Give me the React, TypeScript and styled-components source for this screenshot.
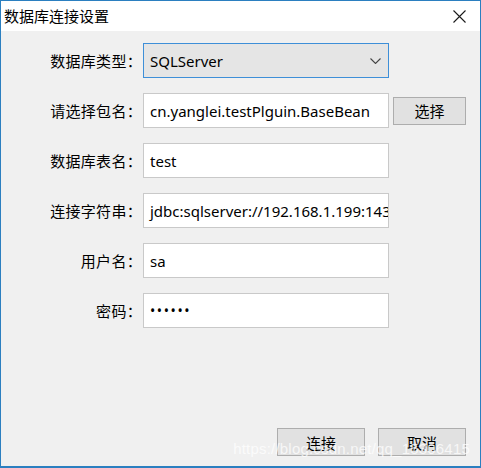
import React from 'react';
import styled, { createGlobalStyle } from 'styled-components';

const GlobalStyle = createGlobalStyle`
  html, body {
    margin: 0;
    padding: 0;
    background: #ffffff;
  }
  * {
    box-sizing: border-box;
  }
`;

const FONT = `"Noto Sans", "Noto Sans CJK SC", sans-serif`;

type Field = {
  label: string;
  value: string;
  kind?: 'select' | 'input' | 'password';
  action?: string;
};

const fields: Field[] = [
  { label: '数据库类型：', value: 'SQLServer', kind: 'select' },
  { label: '请选择包名：', value: 'cn.yanglei.testPlguin.BaseBean', action: '选择' },
  { label: '数据库表名：', value: 'test' },
  { label: '连接字符串：', value: 'jdbc:sqlserver://192.168.1.199:1433;DatabaseName=test' },
  { label: '用户名：', value: 'sa' },
  { label: '密码：', value: '••••••', kind: 'password' },
];

const App = () => {
  return (
    <Window>
      <GlobalStyle />
      <TitleBar>
        <Title>数据库连接设置</Title>
        <CloseButton>
          <svg width="13" height="13" viewBox="0 0 13 13">
            <path d="M0.5 0.5 L12.5 12.5 M12.5 0.5 L0.5 12.5" stroke="#1a1a1a" strokeWidth="1.1" fill="none" />
          </svg>
        </CloseButton>
      </TitleBar>
      <Body>
        <Form>
          {fields.map((f) => (
            <React.Fragment key={f.label}>
              <Label>{f.label}</Label>
              {f.kind === 'select' ? (
                <Select>
                  <span>{f.value}</span>
                  <svg width="11" height="6" viewBox="0 0 11 6">
                    <path d="M0.5 0.5 L5.5 5.5 L10.5 0.5" stroke="#444" strokeWidth="1.1" fill="none" />
                  </svg>
                </Select>
              ) : (
                <TextBox password={f.kind === 'password'}>{f.value}</TextBox>
              )}
              {f.action ? <SmallButton>{f.action}</SmallButton> : <span />}
            </React.Fragment>
          ))}
        </Form>
        <Footer>
          <DialogButton>连接</DialogButton>
          <DialogButton>取消</DialogButton>
        </Footer>
        <Watermark>https://blog.csdn.net/qq_15306415</Watermark>
      </Body>
    </Window>
  );
};

const Window = styled.div`
  position: relative;
  width: 481px;
  height: 468px;
  border: 1px solid #2b7fc0;
  border-bottom-width: 2px;
  display: flex;
  flex-direction: column;
  font-family: ${FONT};
  color: #000;
  overflow: hidden;
`;

const TitleBar = styled.div`
  height: 30px;
  background: #ffffff;
  display: flex;
  align-items: center;
  justify-content: space-between;
  padding: 0 14px 0 3px;
`;

const Title = styled.div`
  font-size: 15px;
  font-family: "Noto Sans CJK SC", sans-serif;
  line-height: 30px;
`;

const CloseButton = styled.div`
  display: flex;
  align-items: center;
`;

const Body = styled.div`
  position: relative;
  flex: 1;
  background: #f0f0f0;
  display: flex;
  flex-direction: column;
  padding-top: 12px;
`;

const Form = styled.div`
  display: grid;
  grid-template-columns: 138px 246px 73px;
  grid-auto-rows: 35px;
  row-gap: 15px;
  column-gap: 4px;
`;

const Label = styled.div`
  font-family: "Noto Sans CJK SC", sans-serif;
  font-size: 15px;
  text-align: right;
  align-self: center;
  white-space: nowrap;
  letter-spacing: 0.3px;
  margin-right: -3px;
`;

const Select = styled.div`
  border: 1px solid #3e8fd8;
  background: #e5e5e5;
  display: flex;
  align-items: center;
  justify-content: space-between;
  padding: 0 7px 0 6px;
  font-size: 15px;
`;

const TextBox = styled.div<{ password?: boolean }>`
  border: 1px solid #c9c9c9;
  background: #ffffff;
  display: flex;
  align-items: center;
  padding: 0 6px;
  font-size: ${(p) => (p.password ? '14px' : '15px')};
  letter-spacing: ${(p) => (p.password ? '1.6px' : '0')};
  white-space: nowrap;
  overflow: hidden;
`;

const SmallButton = styled.div`
  align-self: center;
  height: 28px;
  border: 1px solid #adadad;
  background: #e1e1e1;
  font-family: "Noto Sans CJK SC", sans-serif;
  font-size: 15px;
  display: flex;
  align-items: center;
  justify-content: center;
`;

const Footer = styled.div`
  margin-top: auto;
  display: flex;
  justify-content: flex-end;
  gap: 13px;
  padding: 0 14px 10px 0;
`;

const DialogButton = styled.div`
  width: 88px;
  height: 28px;
  border: 1px solid #adadad;
  background: #e1e1e1;
  font-family: "Noto Sans CJK SC", sans-serif;
  font-size: 15px;
  display: flex;
  align-items: center;
  justify-content: center;
`;

const Watermark = styled.div`
  position: absolute;
  right: 10px;
  bottom: 9px;
  font-family: "Liberation Sans", sans-serif;
  font-size: 15px;
  color: rgba(255, 255, 255, 0.75);
  letter-spacing: 0.2px;
  pointer-events: none;
`;

export default App;
